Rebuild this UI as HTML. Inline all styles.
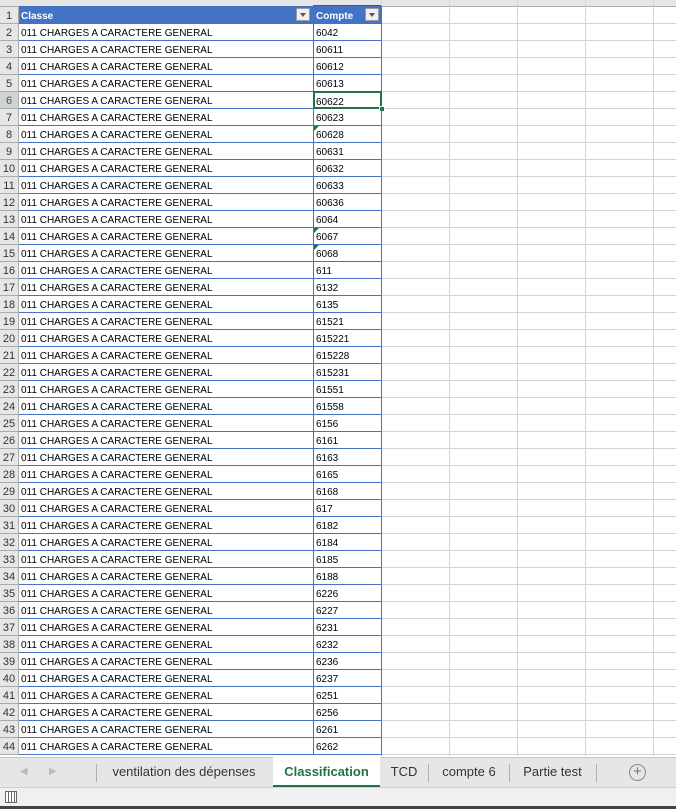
<!DOCTYPE html>
<html><head><meta charset="utf-8"><style>
*{margin:0;padding:0;box-sizing:border-box}
body{width:676px;height:809px;background:#fff;font-family:"Liberation Sans",Arial,sans-serif;font-size:10px;color:#000;position:relative;overflow:hidden}
.hdr{position:absolute;top:0;left:0;width:676px;height:7px;background:#e6e6e6;border-bottom:1px solid #ababab}
.grid{position:absolute;top:7px;left:0;width:676px}
.r{height:17px;position:relative;border-bottom:1px solid #d4d4d4}
.n{position:absolute;left:0;top:0;width:19px;height:17px;background:#e6e6e6;border-right:1px solid #ababab;font-size:11px;line-height:18px;text-align:center;color:#333;border-bottom:1px solid #ababab}
.a{position:absolute;left:19px;top:-1px;width:295px;height:18px;border-bottom:1px solid #4472c4;line-height:21px;padding-left:2px}
.b{position:absolute;left:313px;top:-1px;width:69px;height:18px;border-left:1px solid #4472c4;border-right:1px solid #4472c4;border-bottom:1px solid #4472c4;line-height:21px;padding-left:2px}
.v{position:absolute;top:0;width:1px;height:756px;background:#d4d4d4}
.h1 .a,.h1 .b{background:#4472c4;color:#fff;font-weight:bold}
.dd{position:absolute;top:2px;width:14px;height:13px;background:#f0f0f0;border:1px solid #999}
.dd:after{content:"";position:absolute;left:3px;top:4px;border-left:3px solid transparent;border-right:3px solid transparent;border-top:4px solid #555}
.tabs{position:absolute;top:757px;left:0;width:676px;height:30px;background:#e6e6e6;border-top:1px solid #c6c6c6}
.tab{position:absolute;top:0;height:28px;line-height:28px;font-size:13px;color:#333;text-align:center}
.sep{position:absolute;top:6px;width:1px;height:18px;background:#b0b0b0}
.status{position:absolute;top:787px;left:0;width:676px;height:19px;background:#f0f0f0;border-top:1px solid #d0d0d0}
.bot{position:absolute;top:806px;left:0;width:676px;height:3px;background:#444}
.tri{position:absolute;left:314px;top:0;border-top:5px solid #217346;border-right:5px solid transparent}
</style></head><body>
<div class="hdr"><div style="position:absolute;left:313px;top:5px;width:68px;height:2px;background:#217346"></div></div>
<div class="v" style="left:449px"></div><div class="v" style="left:517px"></div><div class="v" style="left:585px"></div><div class="v" style="left:653px"></div><div class="v" style="left:381px"></div>
<div class="grid">
<div class="r h1"><div class="n">1</div><div class="a">Classe<div class="dd" style="left:277px"></div></div><div class="b">Compte<div class="dd" style="left:51px"></div></div></div>
<div class="r"><div class="n">2</div><div class="a">011 CHARGES A CARACTERE GENERAL</div><div class="b">6042</div></div>
<div class="r"><div class="n">3</div><div class="a">011 CHARGES A CARACTERE GENERAL</div><div class="b">60611</div></div>
<div class="r"><div class="n">4</div><div class="a">011 CHARGES A CARACTERE GENERAL</div><div class="b">60612</div></div>
<div class="r"><div class="n">5</div><div class="a">011 CHARGES A CARACTERE GENERAL</div><div class="b">60613</div></div>
<div class="r"><div class="n" style="color:#217346;background:#d2d2d2">6</div><div class="a">011 CHARGES A CARACTERE GENERAL</div><div class="b" style="border:2px solid #217346;line-height:19px;padding-left:1px">60622<div style="position:absolute;right:-5px;bottom:-5px;width:6px;height:6px;background:#217346;border:1px solid #fff"></div></div></div>
<div class="r"><div class="n">7</div><div class="a">011 CHARGES A CARACTERE GENERAL</div><div class="b">60623</div></div>
<div class="r"><div class="n">8</div><div class="a">011 CHARGES A CARACTERE GENERAL</div><div class="b">60628</div><div class="tri"></div></div>
<div class="r"><div class="n">9</div><div class="a">011 CHARGES A CARACTERE GENERAL</div><div class="b">60631</div></div>
<div class="r"><div class="n">10</div><div class="a">011 CHARGES A CARACTERE GENERAL</div><div class="b">60632</div></div>
<div class="r"><div class="n">11</div><div class="a">011 CHARGES A CARACTERE GENERAL</div><div class="b">60633</div></div>
<div class="r"><div class="n">12</div><div class="a">011 CHARGES A CARACTERE GENERAL</div><div class="b">60636</div></div>
<div class="r"><div class="n">13</div><div class="a">011 CHARGES A CARACTERE GENERAL</div><div class="b">6064</div></div>
<div class="r"><div class="n">14</div><div class="a">011 CHARGES A CARACTERE GENERAL</div><div class="b">6067</div><div class="tri"></div></div>
<div class="r"><div class="n">15</div><div class="a">011 CHARGES A CARACTERE GENERAL</div><div class="b">6068</div><div class="tri"></div></div>
<div class="r"><div class="n">16</div><div class="a">011 CHARGES A CARACTERE GENERAL</div><div class="b">611</div></div>
<div class="r"><div class="n">17</div><div class="a">011 CHARGES A CARACTERE GENERAL</div><div class="b">6132</div></div>
<div class="r"><div class="n">18</div><div class="a">011 CHARGES A CARACTERE GENERAL</div><div class="b">6135</div></div>
<div class="r"><div class="n">19</div><div class="a">011 CHARGES A CARACTERE GENERAL</div><div class="b">61521</div></div>
<div class="r"><div class="n">20</div><div class="a">011 CHARGES A CARACTERE GENERAL</div><div class="b">615221</div></div>
<div class="r"><div class="n">21</div><div class="a">011 CHARGES A CARACTERE GENERAL</div><div class="b">615228</div></div>
<div class="r"><div class="n">22</div><div class="a">011 CHARGES A CARACTERE GENERAL</div><div class="b">615231</div></div>
<div class="r"><div class="n">23</div><div class="a">011 CHARGES A CARACTERE GENERAL</div><div class="b">61551</div></div>
<div class="r"><div class="n">24</div><div class="a">011 CHARGES A CARACTERE GENERAL</div><div class="b">61558</div></div>
<div class="r"><div class="n">25</div><div class="a">011 CHARGES A CARACTERE GENERAL</div><div class="b">6156</div></div>
<div class="r"><div class="n">26</div><div class="a">011 CHARGES A CARACTERE GENERAL</div><div class="b">6161</div></div>
<div class="r"><div class="n">27</div><div class="a">011 CHARGES A CARACTERE GENERAL</div><div class="b">6163</div></div>
<div class="r"><div class="n">28</div><div class="a">011 CHARGES A CARACTERE GENERAL</div><div class="b">6165</div></div>
<div class="r"><div class="n">29</div><div class="a">011 CHARGES A CARACTERE GENERAL</div><div class="b">6168</div></div>
<div class="r"><div class="n">30</div><div class="a">011 CHARGES A CARACTERE GENERAL</div><div class="b">617</div></div>
<div class="r"><div class="n">31</div><div class="a">011 CHARGES A CARACTERE GENERAL</div><div class="b">6182</div></div>
<div class="r"><div class="n">32</div><div class="a">011 CHARGES A CARACTERE GENERAL</div><div class="b">6184</div></div>
<div class="r"><div class="n">33</div><div class="a">011 CHARGES A CARACTERE GENERAL</div><div class="b">6185</div></div>
<div class="r"><div class="n">34</div><div class="a">011 CHARGES A CARACTERE GENERAL</div><div class="b">6188</div></div>
<div class="r"><div class="n">35</div><div class="a">011 CHARGES A CARACTERE GENERAL</div><div class="b">6226</div></div>
<div class="r"><div class="n">36</div><div class="a">011 CHARGES A CARACTERE GENERAL</div><div class="b">6227</div></div>
<div class="r"><div class="n">37</div><div class="a">011 CHARGES A CARACTERE GENERAL</div><div class="b">6231</div></div>
<div class="r"><div class="n">38</div><div class="a">011 CHARGES A CARACTERE GENERAL</div><div class="b">6232</div></div>
<div class="r"><div class="n">39</div><div class="a">011 CHARGES A CARACTERE GENERAL</div><div class="b">6236</div></div>
<div class="r"><div class="n">40</div><div class="a">011 CHARGES A CARACTERE GENERAL</div><div class="b">6237</div></div>
<div class="r"><div class="n">41</div><div class="a">011 CHARGES A CARACTERE GENERAL</div><div class="b">6251</div></div>
<div class="r"><div class="n">42</div><div class="a">011 CHARGES A CARACTERE GENERAL</div><div class="b">6256</div></div>
<div class="r"><div class="n">43</div><div class="a">011 CHARGES A CARACTERE GENERAL</div><div class="b">6261</div></div>
<div class="r"><div class="n">44</div><div class="a">011 CHARGES A CARACTERE GENERAL</div><div class="b">6262</div></div>
</div>
<div class="tabs">
<div style="position:absolute;left:20px;top:8px;color:#bbb;font-size:10px">&#9664;</div>
<div style="position:absolute;left:49px;top:8px;color:#bbb;font-size:10px">&#9654;</div>
<div class="sep" style="left:96px"></div>
<div class="tab" style="left:97px;width:174px">ventilation des dépenses</div>
<div class="tab" style="left:273px;width:107px;background:#fff;color:#217346;font-weight:bold;border-bottom:2px solid #217346;top:-1px;height:30px;line-height:29px">Classification</div>
<div class="tab" style="left:381px;width:46px">TCD</div>
<div class="sep" style="left:428px"></div>
<div class="tab" style="left:429px;width:80px">compte 6</div>
<div class="sep" style="left:509px"></div>
<div class="tab" style="left:510px;width:85px">Partie test</div>
<div class="sep" style="left:596px"></div>
<div style="position:absolute;left:629px;top:6px;width:17px;height:17px;border:1.5px solid #888;border-radius:50%;text-align:center;line-height:14px;color:#777;font-size:15px">+</div>
</div>
<div class="status"><div style="position:absolute;left:5px;top:3px;width:12px;height:12px;border:1px solid #666;background:repeating-linear-gradient(90deg,#fff 0 2px,#666 2px 3px)"></div></div>
<div class="bot"></div>
</body></html>
